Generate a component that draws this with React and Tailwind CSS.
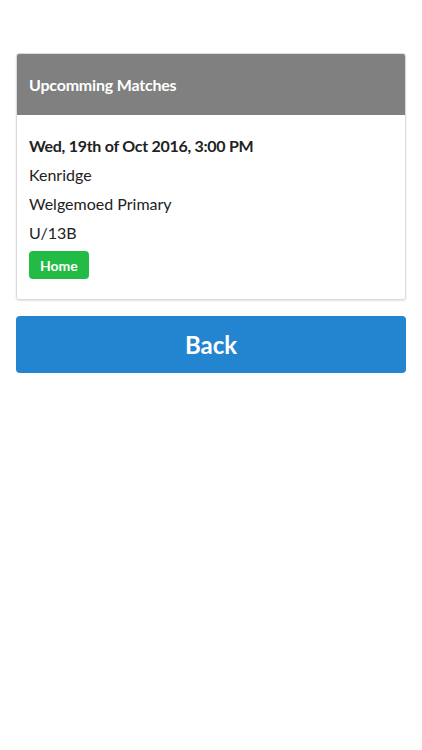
export default function App() {
  const rows = ["Kenridge", "Welgemoed Primary", "U/13B"];

  return (
    <div className="min-h-[750px] bg-white px-4 pt-[53px] font-['Lato','Liberation_Sans',sans-serif]">
      <div className="overflow-hidden rounded-[3px] border border-[#dcdcdc] shadow-[0_1px_2px_rgba(0,0,0,0.12)]">
        <div className="flex h-[61px] items-center bg-[#808080] px-3">
          <h2 className="text-[16px] font-bold tracking-[-0.2px] text-white">Upcomming Matches</h2>
        </div>
        <div className="px-3 pt-4 pb-[20px] text-[16px] text-[#222]">
          <p className="leading-[29px] font-bold tracking-[-0.28px]">Wed, 19th of Oct 2016, 3:00 PM</p>
          {rows.map((r) => (
            <p key={r} className="leading-[29px]">{r}</p>
          ))}
          <span className="mt-1 inline-flex h-[28px] items-center rounded-[4px] bg-[#22bb45] px-[11px] text-[14px] font-bold text-white">
            Home
          </span>
        </div>
      </div>
      <button className="mt-[16px] flex h-[57px] w-full items-center justify-center rounded-[4px] bg-[#2385d0] text-[24px] font-bold text-white">
        Back
      </button>
    </div>
  );
}
